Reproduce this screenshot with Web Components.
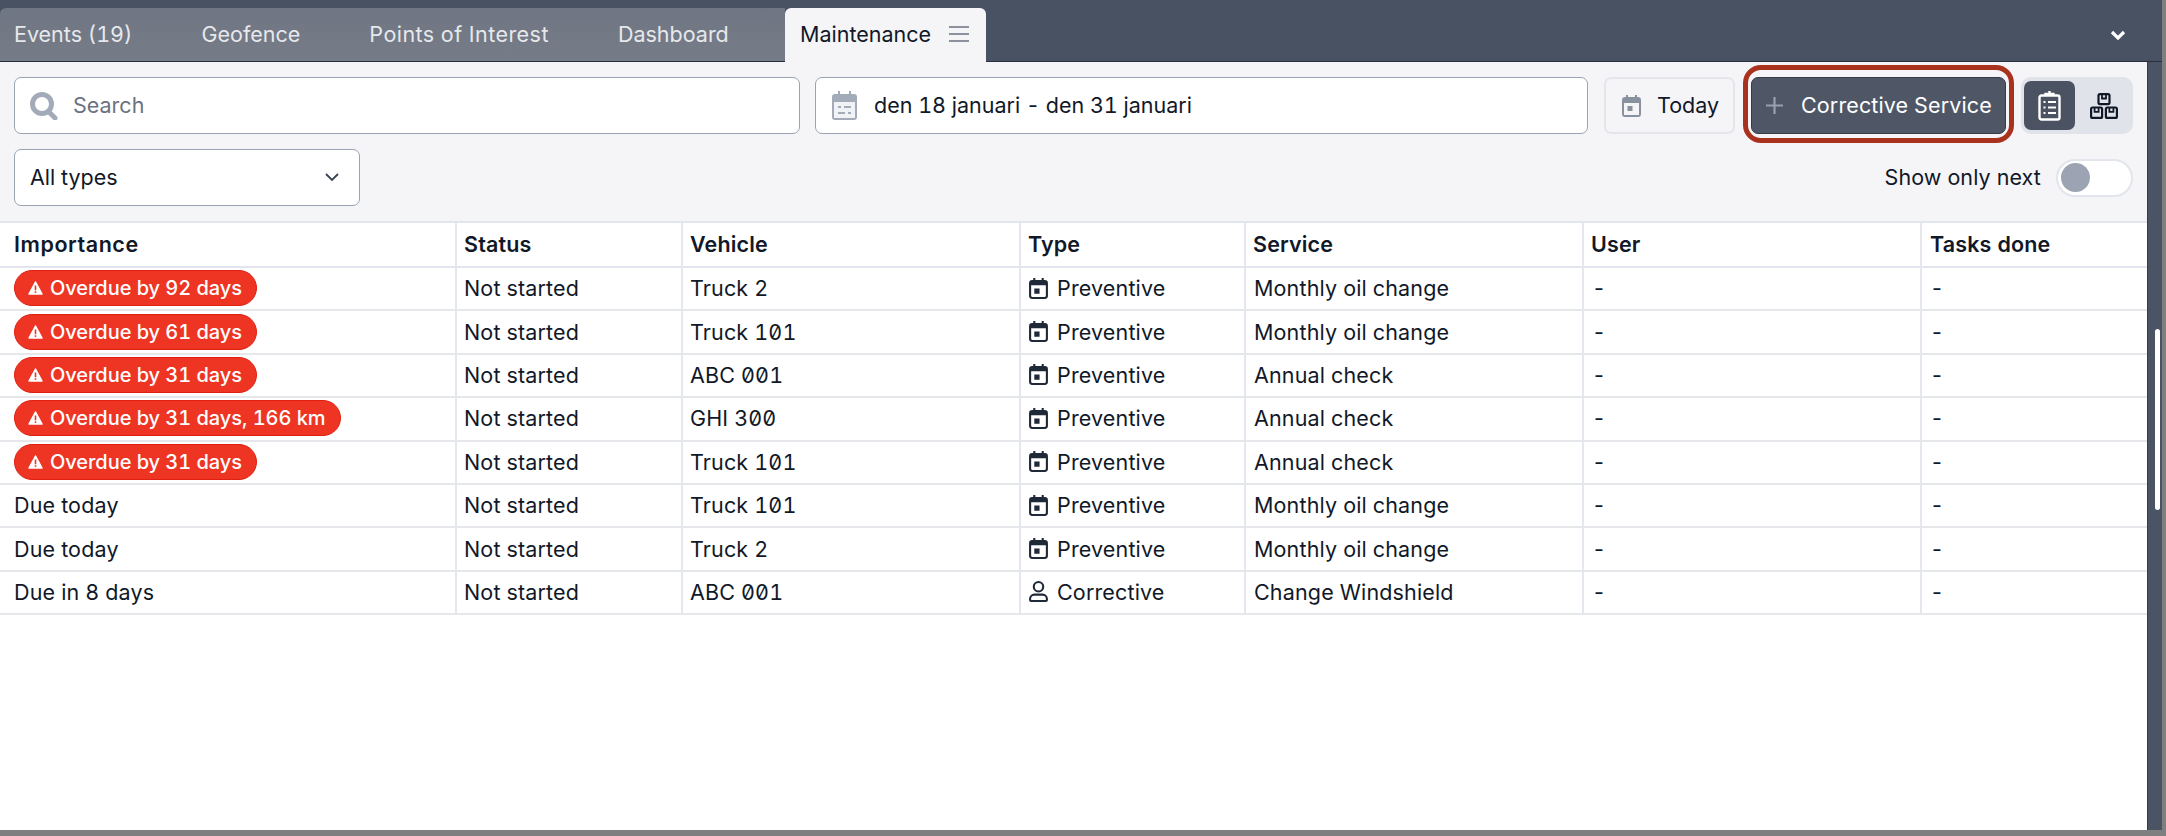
<!DOCTYPE html>
<html><head><meta charset="utf-8"><title>Maintenance</title>
<style>
html,body{margin:0;padding:0;height:100%;overflow:hidden;background:#7f7f7f;font-family:Inter,"Liberation Sans",sans-serif;font-variant-numeric:tabular-nums}
</style></head><body>
<app-shell></app-shell>
<template id="t-shell"><style>
:host{display:grid;grid-template-columns:2147px 15px 4px;grid-template-rows:62px 768px 6px;width:2166px;height:836px}
tab-bar{grid-column:1/3}
.main{display:flex;flex-direction:column;background:#fff;min-width:0}
.rail{background:#4a5464;border-left:1.5px solid #2c3d5c;display:flex;justify-content:flex-end;padding:267px 2px 0 0;box-sizing:border-box}
.thumb{width:5px;height:181px;background:#fff;border-radius:3px}
.edge{background:#7f7f7f;grid-row:1/3;grid-column:3}.foot{grid-column:1/4;background:#7f7f7f}
</style>
<tab-bar></tab-bar>
<div class="main"><tool-bar></tool-bar><service-table></service-table></div>
<div class="rail"><div class="thumb"></div></div><div class="edge"></div><div class="foot"></div>
</template>

<template id="t-tabs"><style>
:host{display:flex;height:62px;box-sizing:border-box;padding-top:8px;background:#485262;font-size:21.5px;border-bottom:1px solid #26303f}
.group{display:flex;gap:69px;align-items:center;padding:0 0 2px 14px;width:785px;background:linear-gradient(#6f7683,#767c87);border-radius:6px 0 0 0;color:#e6e8ec;box-sizing:border-box}
.active{width:201px;background:#f5f5f8;color:#111827;border-radius:6px 6px 0 0;display:flex;align-items:center;gap:18px;padding:0 0 2px 15px;box-sizing:border-box;margin-bottom:-1px}
.active svg{width:20px;height:18px;flex:none}
.chev{margin:21px 36px 0 auto;width:16px;height:12px;flex:none}
</style>
<div class="group"><span>Events (19)</span><span>Geofence</span><span style="letter-spacing:.45px">Points of Interest</span><span>Dashboard</span></div>
<div class="active"><span>Maintenance</span><svg viewBox="0 0 20 18" fill="none" stroke="#8b929e" stroke-width="2"><path d="M0 2h20M0 9h20M0 16h20"/></svg></div>
<svg class="chev" viewBox="0 0 16 12" fill="none" stroke="#fff" stroke-width="3.2"><path d="M2 3l6 6 6-6"/></svg>
</template>

<template id="t-toolbar"><style>
:host{display:block;background:#f5f5f8;height:161px;box-sizing:border-box;padding:15px 14px 0;border-bottom:2px solid #e2e5ec}
.r1,.r2{display:flex;align-items:stretch}
.r1{height:57px}
.r2{height:57px;margin-top:15px;justify-content:space-between;align-items:center}
span{display:block;position:relative;top:-1px}
.inp{background:#fff;border:1.5px solid #9aa3b2;border-radius:7px;box-sizing:border-box;display:flex;align-items:center;font-size:21.5px}
.search{width:786px;color:#6b7280;padding-left:15px;gap:15px}
.date{width:773px;margin-left:15px;color:#111827;padding-left:16px;gap:17px}
.today{width:131px;margin-left:16px;border:2px solid #e4e6ec;border-radius:7px;box-sizing:border-box;display:flex;align-items:center;gap:16px;padding-left:16px;font-size:21.5px;color:#111827}
.cs-wrap{margin-left:16px;position:relative;width:255px}
.cs{height:100%;background:#4f5767;border-radius:7px;border:1px solid #333c4b;box-sizing:border-box;color:#fff;font-size:21.5px;letter-spacing:.12px;display:flex;align-items:center;gap:18px;padding-left:14px}
.ring{position:absolute;left:-8px;top:-12px;right:-8px;bottom:-9px;border:5px solid #a9321e;border-radius:18px;box-sizing:border-box}
.seg{margin-left:15px;width:112px;background:#e0e3ea;border-radius:10px;padding:4px 3px;box-sizing:border-box;display:flex}
.seg div{flex:1;display:flex;align-items:center;justify-content:center;border-radius:7px}
.seg .on{background:#4b5362;flex:0 0 51px}
.seg svg.box{margin-left:2px}
.sel{width:346px;height:57px;justify-content:space-between;padding:0 20px 0 15px;color:#111827}
.next{display:flex;align-items:center;gap:15px;font-size:21.5px;letter-spacing:.1px;color:#111827}
.sw{width:77px;height:38px;border:2px solid #e2e5ec;background:#fff;border-radius:19px;box-sizing:border-box;display:flex;align-items:center;padding-left:3px}
.sw i{width:29px;height:29px;border-radius:50%;background:#9ca3b2;display:block}
</style>
<div class="r1">
<div class="inp search"><svg width="28" height="28" viewBox="0 0 28 28" fill="none" stroke="#a3aab8"><circle cx="12" cy="12" r="9.5" stroke-width="5"/><path d="M19 20l6 6" stroke-width="5" stroke-linecap="round"/></svg><span>Search</span></div>
<div class="inp date"><svg width="25" height="29" viewBox="0 0 25 29"><path fill="#a3aab8" d="M6 0h2v3h9V0h2v3h3a3 3 0 0 1 3 3v20a3 3 0 0 1-3 3H3a3 3 0 0 1-3-3V6a3 3 0 0 1 3-3h3z"/><rect x="2" y="11" width="21" height="16" fill="#fff" opacity=".85"/><path stroke="#a3aab8" stroke-width="2.2" d="M6 16h3M12 16h7M6 22h7M16 22h3"/></svg><span>den 18 januari - den 31 januari</span></div>
<div class="today"><svg width="19" height="22" viewBox="0 0 19 22"><path fill="#8a919e" d="M4 0h2v2h7V0h2v2h1a3 3 0 0 1 3 3v14a3 3 0 0 1-3 3H3a3 3 0 0 1-3-3V5a3 3 0 0 1 3-3h1z"/><rect x="2" y="8" width="15" height="12" fill="#f5f5f8"/><rect x="5.5" y="11" width="5" height="5" fill="#8a919e"/></svg><span>Today</span></div>
<div class="cs-wrap"><div class="cs"><svg width="17" height="17" viewBox="0 0 17 17" stroke="#9aa0ac" stroke-width="2.2"><path d="M8.5 0v17M0 8.5h17"/></svg><span>Corrective Service</span></div><div class="ring"></div></div>
<div class="seg"><div class="on"><svg width="23" height="30" viewBox="0 0 23 30" fill="none" stroke="#fff" stroke-width="2.4"><rect x="1.5" y="4.5" width="20" height="24" rx="2"/><path d="M7.5 4.5V3h8v1.5M11.5 0v3"/><path stroke-width="2" d="M5.5 11h2M10 11h8M5.5 16.5h2M10 16.5h8M5.5 22h2M10 22h8"/></svg></div>
<div><svg class="box" width="28" height="26" viewBox="0 0 28 26" fill="none" stroke="#111827" stroke-width="2.2"><rect x="8.5" y="1.1" width="11" height="10" rx="1.5"/><rect x="1.1" y="14.5" width="11" height="10.4" rx="1.5"/><rect x="15.9" y="14.5" width="11" height="10.4" rx="1.5"/><path d="M12 1.1v4.4h4V1.1M4.6 14.5v4.4h4v-4.400M19.400 14.500v4.400h4v-4.400" stroke-width="1.800"/></svg></div></div>
</div>
<div class="r2"><div class="inp sel"><span>All types</span><svg width="14" height="9" viewBox="0 0 14 9" fill="none" stroke="#374151" stroke-width="1.8"><path d="M1 1l6 6 6-6"/></svg></div>
<div class="next"><span>Show only next</span><div class="sw"><i></i></div></div></div>
</template>

<template id="t-table"><style>
:host{display:block;background:#fff;font-size:21.5px;letter-spacing:.15px;color:#111827;flex:1}
.grid{display:grid;grid-template-columns:457px 226px 338px 225px 338px 338px 225px}
</style><div class="grid"><slot></slot></div></template>

<template id="t-cell"><style>
:host{display:flex;align-items:center;height:43.4px;box-sizing:border-box;border-bottom:2px solid #e5e7eb;border-right:2px solid #e5e7ee;padding:0 0 1px 8px;gap:9px;white-space:nowrap}
:host([first]){padding-left:14px}
:host([head]){height:45px;font-weight:600;border-bottom-color:#e2e5ee;padding-left:7px}
:host([head][first]){padding-left:14px;letter-spacing:.55px}
:host([tight]){padding-left:7px}
:host([last]){border-right:0;padding-left:8px}
:host([veh]){font-variant-numeric:tabular-nums slashed-zero}
</style><slot name="icon"></slot><slot></slot></template>

<template id="t-badge"><style>
:host{display:inline-flex;align-items:center;height:36px;background:#ee3524;color:#fff;border-radius:18px;padding:0 14px 0 13px;gap:7px;font-size:20px;font-weight:500;letter-spacing:-.05px;border:1px solid #e01f10;box-sizing:border-box}
</style><svg width="15" height="14" viewBox="0 0 15 14"><path fill="#fff" stroke="#fff" stroke-width="1.5" stroke-linejoin="round" d="M7.5 1L14 13H1z"/><rect x="6.7" y="4.5" width="1.6" height="4.8" fill="#ee3524"/><rect x="6.7" y="10.3" width="1.6" height="1.6" fill="#ee3524"/></svg><slot></slot></template>

<script>
function reg(name,tid,fn){customElements.define(name,class extends HTMLElement{constructor(){super();this.attachShadow({mode:'open'}).appendChild(document.getElementById(tid).content.cloneNode(true));}connectedCallback(){if(fn&&!this._d){this._d=1;fn(this);}}});}
reg('tab-bar','t-tabs');reg('tool-bar','t-toolbar');
reg('svc-cell','t-cell');reg('due-badge','t-badge');
const cal='<svg slot="icon" style="display:block;flex:none" width="19" height="21" viewBox="0 0 18 20" fill="none"><path stroke="#1f2937" stroke-width="2" d="M3 3h12a2 2 0 0 1 2 2v12a2 2 0 0 1-2 2H3a2 2 0 0 1-2-2V5a2 2 0 0 1 2-2z"/><path fill="#1f2937" d="M1 3h16v4H1zM4 0h2v3H4zM12 0h2v3h-2zM5 10h5v5H5z"/></svg>';
const usr='<svg slot="icon" style="display:block;flex:none" width="19" height="21" viewBox="0 0 18 20" fill="none" stroke="#1f2937" stroke-width="2"><circle cx="9" cy="5.500" r="4.500"/><path d="M5 13h8a4 4 0 0 1 4 4v1a1 1 0 0 1-1 1H2a1 1 0 0 1-1-1v-1a4 4 0 0 1 4-4z"/></svg>';
const rows=[
['Overdue by 92 days','Truck 2',1,'Monthly oil change'],
['Overdue by 61 days','Truck 101',1,'Monthly oil change'],
['Overdue by 31 days','ABC 001',1,'Annual check'],
['Overdue by 31 days, 166 km','GHI 300',1,'Annual check'],
['Overdue by 31 days','Truck 101',1,'Annual check'],
['Due today','Truck 101',1,'Monthly oil change'],
['Due today','Truck 2',1,'Monthly oil change'],
['Due in 8 days','ABC 001',0,'Change Windshield']];
reg('service-table','t-table',el=>{
 let h='';
 ['Importance','Status','Vehicle','Type','Service','User','Tasks done'].forEach((t,i)=>{h+=`<svc-cell head ${i==0?'first':''} ${i==6?'last':''}>${t}</svc-cell>`;});
 rows.forEach(r=>{
  h+=`<svc-cell first>${r[0].startsWith('Over')?`<due-badge>${r[0]}</due-badge>`:r[0]}</svc-cell><svc-cell tight>Not started</svc-cell><svc-cell tight veh>${r[1]}</svc-cell><svc-cell>${r[2]?cal:usr}${r[2]?'Preventive':'Corrective'}</svc-cell><svc-cell>${r[3]}</svc-cell><svc-cell>-</svc-cell><svc-cell last>-</svc-cell>`;
 });
 el.innerHTML=h;
});
reg('app-shell','t-shell');
</script>
</body></html>
